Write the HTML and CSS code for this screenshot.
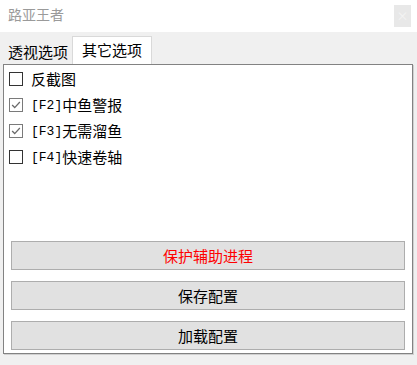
FILE: index.html
```html
<!DOCTYPE html>
<html lang="zh-CN">
<head>
  <meta charset="UTF-8">
  <title>路亚王者</title>
  <link rel="stylesheet" href="styles.css">
</head>
<body>
  <div class="titlebar">
    <div class="title">路亚王者</div>
    <div class="close">×</div>
  </div>

  <div class="tabs">
    <div class="tab">透视选项</div>
    <div class="tab active">其它选项</div>
  </div>

  <div class="panel">
    <div class="options">
      <label class="option"><span class="box"></span>反截图</label>
      <label class="option"><span class="box checked"><svg viewBox="0 0 14 14"><path d="M2.5 7 L5.5 10 L11.5 3.5" /></svg></span><span class="key">[F2]</span>中鱼警报</label>
      <label class="option"><span class="box checked"><svg viewBox="0 0 14 14"><path d="M2.5 7 L5.5 10 L11.5 3.5" /></svg></span><span class="key">[F3]</span>无需溜鱼</label>
      <label class="option"><span class="box"></span><span class="key">[F4]</span>快速卷轴</label>
    </div>

    <div class="buttons">
      <div class="btn red">保护辅助进程</div>
      <div class="btn">保存配置</div>
      <div class="btn">加载配置</div>
    </div>
  </div>
</body>
</html>
```

FILE: styles.css
```css
body {
  margin: 0;
  width: 417px;
  height: 365px;
  background: #f0f0f0;
  font-family: "Microsoft YaHei", "Noto Sans CJK SC", sans-serif;
  font-size: 15px;
  color: #000;
  overflow: hidden;
}

.titlebar {
  height: 32px;
  background: #fff;
  display: flex;
  align-items: flex-start;
  justify-content: space-between;
}

.title {
  padding: 5px 0 0 8px;
  font-size: 14px;
  line-height: 18px;
  color: #9a9a9a;
}

.close {
  width: 17px;
  height: 22px;
  margin: 5px 6px 0 0;
  background: #e8e8e8;
  color: #f4f4f4;
  font-size: 12px;
  line-height: 22px;
  text-align: center;
}

.tabs {
  height: 32px;
  display: flex;
  align-items: flex-end;
  padding-left: 3px;
}

.tab {
  height: 24px;
  line-height: 24px;
  padding: 0 4px 0 5px;
  font-size: 15px;
  color: #000;
}

.tab.active {
  height: 28px;
  line-height: 26px;
  padding: 0 9px 0 9px;
  background: #fff;
  border: 1px solid #d9d9d9;
  border-bottom: none;
  box-sizing: border-box;
}

.panel {
  margin: 0 4px 0 3px;
  height: 290px;
  box-sizing: border-box;
  background: #fff;
  border: 1px solid #828282;
  box-shadow: 1px 1px 0 #d0d0d0;
  display: flex;
  flex-direction: column;
  padding: 0 7px 3px 7px;
}

.options {
  padding-top: 1px;
  margin-left: -2px;
}

.option {
  display: flex;
  align-items: center;
  height: 26px;
  line-height: 26px;
  white-space: nowrap;
}

.box {
  width: 14px;
  height: 14px;
  box-sizing: border-box;
  border: 1px solid #333;
  margin-right: 8px;
  display: flex;
}

.box.checked {
  border-color: #7a7a7a;
}

.box svg {
  width: 12px;
  height: 12px;
  fill: none;
  stroke: #6a6a6a;
  stroke-width: 1.5;
}

.key {
  font-family: "Liberation Mono", monospace;
  font-size: 13px;
  padding-top: 1px;
}

.buttons {
  margin-top: auto;
  display: flex;
  flex-direction: column;
  gap: 11px;
}

.btn {
  height: 29px;
  box-sizing: border-box;
  border: 1px solid #adadad;
  background: #e1e1e1;
  text-align: center;
  line-height: 27px;
  font-size: 15px;
}

.btn.red {
  color: #ff0000;
}
```
